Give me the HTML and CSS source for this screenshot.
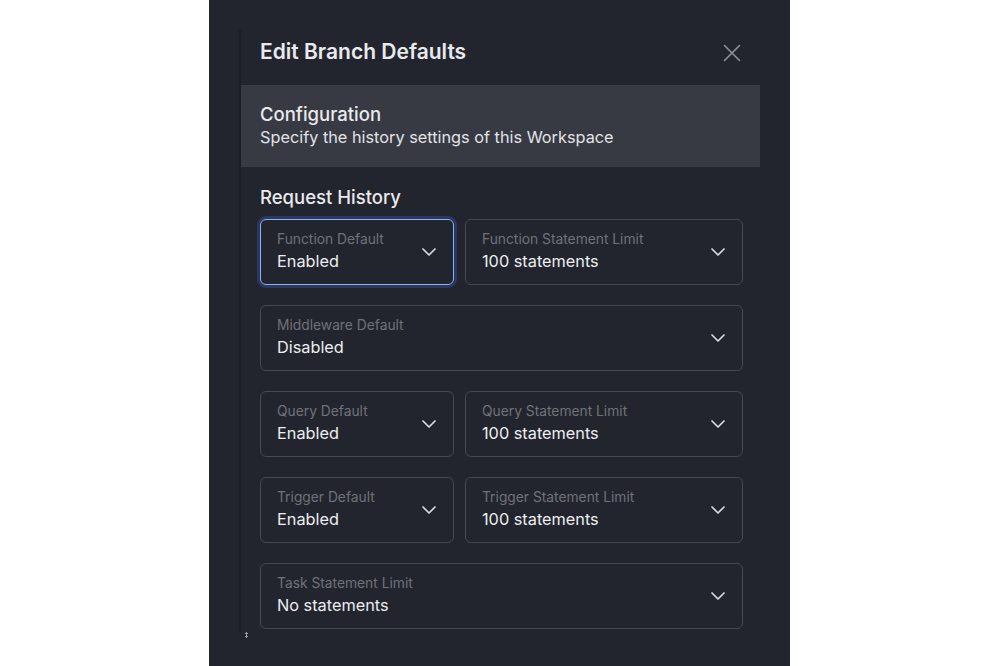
FILE: index.html
```html
<!DOCTYPE html>
<html lang="en">
<head>
<meta charset="utf-8">
<title>Edit Branch Defaults</title>
<link rel="stylesheet" href="styles.css">
</head>
<body>
<div class="panel">
  <div class="sheet">
    <header class="header">
      <h1 class="title">Edit Branch Defaults</h1>
      <button class="close" aria-label="Close">
        <svg width="18" height="18" viewBox="0 0 18 18"><path d="M1.5 1.5 L16.5 16.5 M16.5 1.5 L1.5 16.5" stroke="currentColor" stroke-width="1.6" stroke-linecap="round" fill="none"/></svg>
      </button>
    </header>
    <section class="config">
      <div class="config-title">Configuration</div>
      <div class="config-sub">Specify the history settings of this Workspace</div>
    </section>
    <section class="body">
      <h2 class="section-title">Request History</h2>
      <div class="rows">
        <div class="row split">
          <div class="field focused">
            <div class="texts"><div class="label">Function Default</div><div class="value">Enabled</div></div>
            <svg class="chev" width="14" height="8" viewBox="0 0 14 8"><path d="M1 1 L7 7 L13 1" stroke="currentColor" stroke-width="1.7" fill="none" stroke-linecap="round" stroke-linejoin="round"/></svg>
          </div>
          <div class="field">
            <div class="texts"><div class="label">Function Statement Limit</div><div class="value">100 statements</div></div>
            <svg class="chev" width="14" height="8" viewBox="0 0 14 8"><path d="M1 1 L7 7 L13 1" stroke="currentColor" stroke-width="1.7" fill="none" stroke-linecap="round" stroke-linejoin="round"/></svg>
          </div>
        </div>
        <div class="row">
          <div class="field">
            <div class="texts"><div class="label">Middleware Default</div><div class="value">Disabled</div></div>
            <svg class="chev" width="14" height="8" viewBox="0 0 14 8"><path d="M1 1 L7 7 L13 1" stroke="currentColor" stroke-width="1.7" fill="none" stroke-linecap="round" stroke-linejoin="round"/></svg>
          </div>
        </div>
        <div class="row split">
          <div class="field">
            <div class="texts"><div class="label">Query Default</div><div class="value">Enabled</div></div>
            <svg class="chev" width="14" height="8" viewBox="0 0 14 8"><path d="M1 1 L7 7 L13 1" stroke="currentColor" stroke-width="1.7" fill="none" stroke-linecap="round" stroke-linejoin="round"/></svg>
          </div>
          <div class="field">
            <div class="texts"><div class="label">Query Statement Limit</div><div class="value">100 statements</div></div>
            <svg class="chev" width="14" height="8" viewBox="0 0 14 8"><path d="M1 1 L7 7 L13 1" stroke="currentColor" stroke-width="1.7" fill="none" stroke-linecap="round" stroke-linejoin="round"/></svg>
          </div>
        </div>
        <div class="row split">
          <div class="field">
            <div class="texts"><div class="label">Trigger Default</div><div class="value">Enabled</div></div>
            <svg class="chev" width="14" height="8" viewBox="0 0 14 8"><path d="M1 1 L7 7 L13 1" stroke="currentColor" stroke-width="1.7" fill="none" stroke-linecap="round" stroke-linejoin="round"/></svg>
          </div>
          <div class="field">
            <div class="texts"><div class="label">Trigger Statement Limit</div><div class="value">100 statements</div></div>
            <svg class="chev" width="14" height="8" viewBox="0 0 14 8"><path d="M1 1 L7 7 L13 1" stroke="currentColor" stroke-width="1.7" fill="none" stroke-linecap="round" stroke-linejoin="round"/></svg>
          </div>
        </div>
        <div class="row">
          <div class="field">
            <div class="texts"><div class="label">Task Statement Limit</div><div class="value">No statements</div></div>
            <svg class="chev" width="14" height="8" viewBox="0 0 14 8"><path d="M1 1 L7 7 L13 1" stroke="currentColor" stroke-width="1.7" fill="none" stroke-linecap="round" stroke-linejoin="round"/></svg>
          </div>
        </div>
      </div>
    </section>
    <div class="grip"></div>
  </div>
</div>
</body>
</html>
```
FILE: styles.css
```css
* { box-sizing: border-box; }
html, body { margin: 0; padding: 0; }
body {
  background: #ffffff;
  font-family: Inter, "Noto Sans", "Liberation Sans", sans-serif;
  width: 1000px;
  height: 666px;
  overflow: hidden;
}
.panel {
  margin-left: 209px;
  width: 581px;
  height: 666px;
  background: #22252d;
  padding-top: 30px;
  padding-left: 30px;
}
.sheet {
  position: relative;
  width: 521px;
  height: 602px;
  border-left: 2px solid #1c1e25;
}
.header {
  height: 55px;
  display: flex;
  align-items: center;
  justify-content: space-between;
  padding: 0 19px 12px 19px;
}
.title {
  margin: 0;
  font-size: 21px;
  font-weight: 600;
  color: #e9eaee;
  letter-spacing: 0;
}
.close {
  background: none;
  border: 0;
  padding: 0;
  margin-top: 2px;
  color: #8e9199;
  display: flex;
  width: 18px;
  height: 18px;
}
.config {
  background: #373a43;
  height: 82px;
  padding: 17px 19px 0 19px;
}
.config-title {
  font-size: 18.5px;
  line-height: 24px;
  color: #e9eaee;
  font-weight: 500;
}
.config-sub {
  font-size: 16.3px;
  line-height: 22px;
  color: #e2e3e7;
}
.body {
  padding: 18px 17px 0 19px;
}
.section-title {
  margin: 0 0 10px 0;
  font-size: 18.5px;
  line-height: 24px;
  font-weight: 500;
  color: #e9eaee;
}
.rows {
  display: flex;
  flex-direction: column;
  gap: 20px;
}
.row {
  display: grid;
  grid-template-columns: 1fr;
}
.row.split {
  grid-template-columns: 194px 1fr;
  gap: 11px;
}
.field {
  height: 66px;
  border: 1px solid #464951;
  border-radius: 6px;
  padding: 10px 16px 0 16px;
  display: flex;
  align-items: center;
  justify-content: space-between;
}
.field.focused {
  border: 1.5px solid #8fb0ee;
  box-shadow: 0 0 0 3px rgba(50, 80, 160, 0.45);
}
.texts {
  align-self: flex-start;
}
.label {
  font-size: 13.8px;
  line-height: 18px;
  color: #6f727a;
}
.value {
  margin-top: 2px;
  font-size: 16.3px;
  line-height: 22px;
  color: #eceef1;
}
.chev {
  color: #d8dade;
  margin-right: 1px;
  margin-bottom: 10px;
}
.grip {
  position: absolute;
  left: 4px;
  bottom: -6px;
  width: 3px;
  height: 6px;
  background: radial-gradient(circle, #9a9ca3 1px, transparent 1.2px) 0 0 / 3px 3px;
}
```
